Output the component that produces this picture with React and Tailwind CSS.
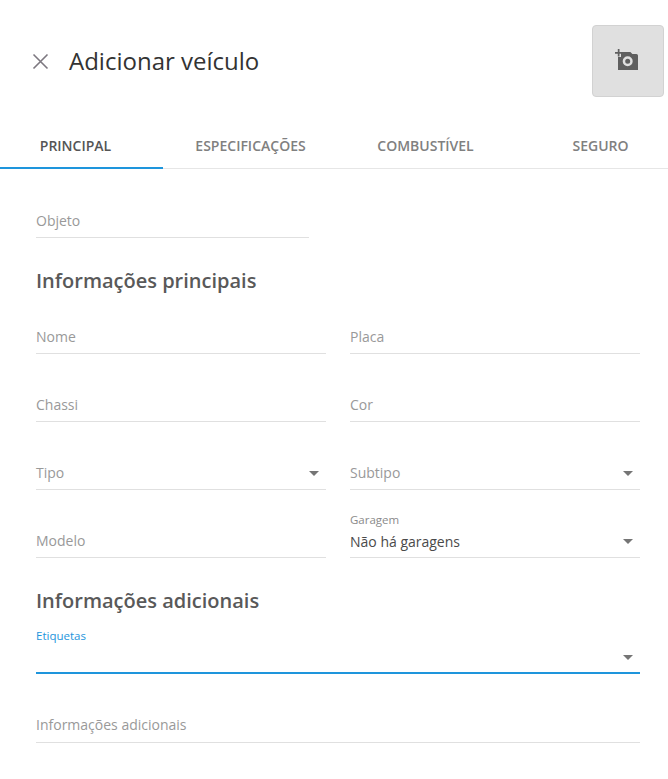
function Caret({ active }) {
  return (
    <svg
      width="10"
      height="5"
      viewBox="0 0 10 5"
      className={`absolute right-[7px] ${active ? "bottom-[12px]" : "bottom-[13px]"}`}
    >
      <path d="M0 0h10L5 5z" fill="#757575" />
    </svg>
  );
}

function Field({ label, small, value, select, active, last, className = "" }) {
  return (
    <div
      className={`relative h-[46px] ${active ? "border-b-2 border-[#1e95dc]" : "border-b border-[#e0e0e0]"} ${className}`}
    >
      {small && (
        <div className={`absolute left-0 top-[1px] text-[11.5px] leading-[14px] ${active ? "text-[#1e95dc]" : "text-[#8a8a8a]"}`}>
          {small}
        </div>
      )}
      {label && (
        <div className={`absolute left-0 text-sm leading-5 text-[#999999] ${last ? "bottom-[7px]" : "bottom-[6px]"}`}>
          {label}
        </div>
      )}
      {value && <div className="absolute left-0 bottom-[5px] text-sm leading-5 text-[#4a4a4a]">{value}</div>}
      {select && <Caret active={active} />}
    </div>
  );
}

function Row({ children }) {
  return <div className="grid grid-cols-2 gap-x-6 mb-[22px]">{children}</div>;
}

const tabs = ["PRINCIPAL", "ESPECIFICAÇÕES", "COMBUSTÍVEL", "SEGURO"];

export default function App() {
  return (
    <div className="w-[668px] h-[779px] bg-white overflow-hidden font-['Open_Sans',sans-serif]">
      <header className="h-[122px] flex items-start pl-[32px] pr-1 pt-[25px]">
        <div className="flex items-center h-[72px] flex-1 gap-[20px]">
          <svg width="17" height="17" viewBox="0 0 17 17" fill="none" stroke="#7d7880" strokeWidth="1.6">
            <path d="M1.5 1.5l14 14M15.5 1.5l-14 14" />
          </svg>
          <h1 className="text-[24px] leading-8 text-[#333333]">Adicionar veículo</h1>
        </div>
        <button className="w-[72px] h-[72px] rounded-[4px] bg-[#e0e0e0] border border-[#d2d2d2] flex items-center justify-center">
          <svg width="24" height="22" viewBox="0 0 24 22" className="mt-[-2px] mr-[2px]">
            <path
              fillRule="evenodd"
              d="M3 8h3V3h9.4l2 2h4A1.6 1.6 0 0 1 23 6.6V21H3z M12.7 7.3a5 5 0 1 0 0 10a5 5 0 0 0 0-10z M12.7 9.8a2.500 2.500 0 1 1 0 5a2.500 2.500 0 0 1 0-5z"
              fill="#5f5f5f"
            />
            <path d="M0 3h2.800V0h1.700v3h2.800v1.700H4.500v2.800H2.800V4.700H0z" fill="#5f5f5f" />
          </svg>
        </button>
      </header>

      <nav className="h-[47px] border-b border-[#e6e6e6]">
        <div className="flex ml-[-12px] h-[46px]">
          {tabs.map((t, i) => (
            <div
              key={t}
              className={`w-[175px] h-[47px] pt-[2px] shrink-0 flex items-center justify-center text-sm font-semibold border-b-2 ${
                i === 0 ? "text-[#555555] border-[#1e95dc]" : "text-[#808080] border-transparent"
              }`}
            >
              {t}
            </div>
          ))}
        </div>
      </nav>

      <main className="pl-9 pr-7">
        <Field label="Objeto" className="w-[273px] mt-[23px]" />
        <h2 className="mt-[27px] mb-[11px] text-[20px] leading-8 font-semibold text-[#595959]">Informações principais</h2>
        <Row>
          <Field label="Nome" />
          <Field label="Placa" />
        </Row>
        <Row>
          <Field label="Chassi" />
          <Field label="Cor" />
        </Row>
        <Row>
          <Field label="Tipo" select />
          <Field label="Subtipo" select />
        </Row>
        <div className="grid grid-cols-2 gap-x-6">
          <Field label="Modelo" />
          <Field small="Garagem" value="Não há garagens" select />
        </div>
        <h2 className="mt-[27px] text-[20px] leading-8 font-semibold text-[#595959]">Informações adicionais</h2>
        <Field small="Etiquetas" select active className="mt-[11px] h-[45px]" />
        <Field label="Informações adicionais" last className="mt-[23px]" />
      </main>
    </div>
  );
}
